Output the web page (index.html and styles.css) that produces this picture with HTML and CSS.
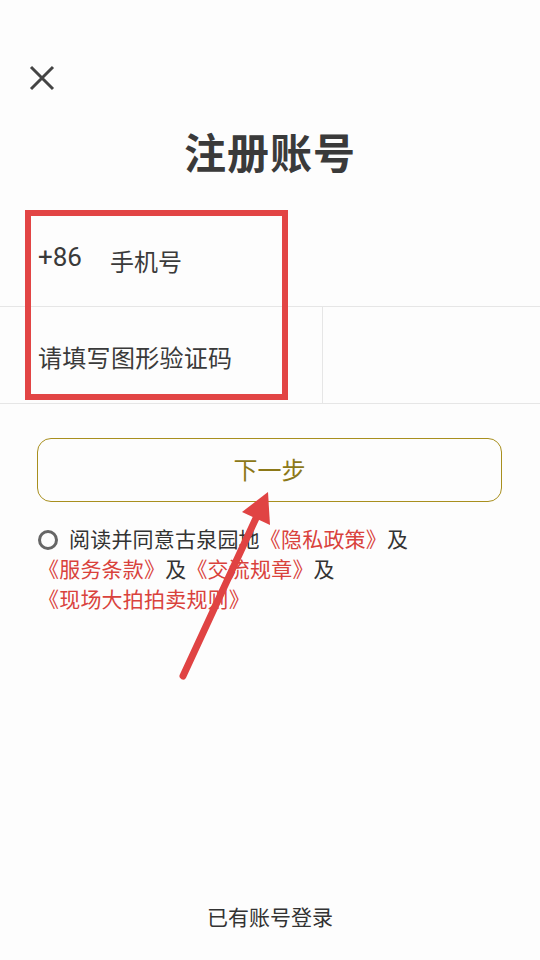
FILE: index.html
```html
<!DOCTYPE html>
<html lang="zh-CN">
<head>
<meta charset="utf-8">
<title>注册账号</title>
<link rel="stylesheet" href="styles.css">
</head>
<body>
<div class="page">
  <div class="header">
    <svg class="close" width="26" height="26" viewBox="0 0 26 26"><path d="M2 2L24 24M24 2L2 24" stroke="#444" stroke-width="3" fill="none"/></svg>
  </div>
  <h1 class="title">注册账号</h1>
  <div class="form">
    <div class="row">
      <span class="code">+86</span><span class="ph">手机号</span>
    </div>
    <div class="row row2">
      <div class="cell-left"><span class="ph">请填写图形验证码</span></div>
      <div class="cell-right"></div>
    </div>
    <div class="mark"></div>
  </div>
  <div class="btn">下一步</div>
  <div class="agree">
    <span class="radio"></span><span class="t1">阅读并同意古泉园地</span><span class="link">《隐私政策》</span>及<br>
    <span class="link">《服务条款》</span>及<span class="link">《交流规章》</span>及<br>
    <span class="link">《现场大拍拍卖规则》</span>
  </div>
  <div class="spacer"></div>
  <div class="login">已有账号登录</div>
  <svg class="arrow" width="540" height="960" viewBox="0 0 540 960">
    <line x1="183" y1="676" x2="257" y2="516" stroke="#e04343" stroke-width="7" stroke-linecap="round"/>
    <polygon points="268,492 242,512 270,525" fill="#e04343"/>
  </svg>
</div>
</body>
</html>
```
FILE: styles.css
```css
* { box-sizing: border-box; }
html, body { margin: 0; padding: 0; background: #fdfdfd; }
body {
  font-family: "Noto Sans CJK SC", "Noto Sans", sans-serif;
  color: #333;
}
.page {
  position: relative;
  width: 540px;
  height: 960px;
  display: flex;
  flex-direction: column;
  overflow: hidden;
}
.header {
  height: 90px;
  padding: 65px 0 0 29px;
}
.close { display: block; }
.title {
  margin: 36px 0 0;
  text-align: center;
  font-size: 42px;
  line-height: 50px;
  font-weight: 700;
  color: #3a3a3a;
  letter-spacing: 1px;
}
.form {
  position: relative;
  margin-top: 34px;
}
.row {
  height: 97px;
  border-bottom: 1px solid #e6e6e6;
  display: flex;
  align-items: center;
  padding: 4px 0 0 38px;
  font-size: 24px;
  color: #3a3a3a;
}
.code {
  width: 72px;
  font-family: Roboto, "Noto Sans", sans-serif;
  font-size: 26px;
  margin-top: -6px;
}
.row2 { padding: 0; align-items: stretch; }
.cell-left {
  width: 323px;
  border-right: 1px solid #e6e6e6;
  display: flex;
  align-items: center;
  padding: 2px 0 0 38px;
  letter-spacing: 0.3px;
}
.cell-right { flex: 1; }
.mark {
  position: absolute;
  left: 25px;
  top: 0;
  width: 263px;
  height: 190px;
  border: 6px solid #e24545;
}
.btn {
  margin: 34px 38px 0 37px;
  height: 64px;
  border: 1.5px solid #a88f1e;
  border-radius: 14px;
  display: flex;
  align-items: center;
  justify-content: center;
  font-size: 24px;
  color: #8c7818;
  padding-bottom: 4px;
}
.agree {
  margin-top: 21px;
  padding-left: 38px;
  font-size: 21px;
  line-height: 30px;
  color: #333;
  letter-spacing: 0.2px;
}
.radio {
  display: inline-block;
  width: 20px;
  height: 20px;
  border: 3px solid #666;
  border-radius: 50%;
  vertical-align: -3px;
  margin-right: 11px;
}
.link { color: #d9423c; }
.spacer { flex: 1; }
.login {
  text-align: center;
  font-size: 21px;
  line-height: 30px;
  color: #333;
  padding-bottom: 29px;
}
.arrow {
  position: absolute;
  left: 0;
  top: 0;
  pointer-events: none;
}
```
